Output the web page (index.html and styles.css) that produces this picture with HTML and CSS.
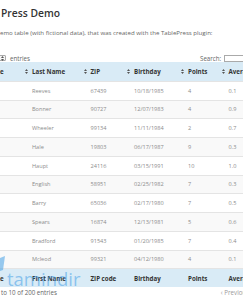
FILE: index.html
```html
<!DOCTYPE html>
<html>
<head>
<meta charset="utf-8">
<link rel="stylesheet" href="styles.css">
</head>
<body>
<div class="page">
  <h1 class="title">Press Demo</h1>
  <p class="desc">emo table (with fictional data), that was created with the TablePress plugin:</p>
  <div class="controls">
    <div class="length"><span class="select"><svg class="sel-arrow" width="3" height="5" viewBox="0 0 3 5"><path d="M0 2 L1.5 0 L3 2 Z M0 3 L1.5 5 L3 3 Z" fill="#555"/></svg></span><span>entries</span></div>
    <div class="search"><span>Search:</span><span class="input"></span></div>
  </div>
  <table class="tbl">
    <colgroup>
      <col class="c0"><col class="c1"><col class="c2"><col class="c3"><col class="c4"><col class="c5">
    </colgroup>
    <thead>
      <tr>
        <th class="first">e</th>
        <th><svg class="sort" width="3" height="5" viewBox="0 0 3 5"><path d="M0 2 L1.5 0 L3 2 Z M0 3 L1.5 5 L3 3 Z"/></svg>Last Name</th>
        <th><svg class="sort" width="3" height="5" viewBox="0 0 3 5"><path d="M0 2 L1.5 0 L3 2 Z M0 3 L1.5 5 L3 3 Z"/></svg>ZIP</th>
        <th><svg class="sort" width="3" height="5" viewBox="0 0 3 5"><path d="M0 2 L1.5 0 L3 2 Z M0 3 L1.5 5 L3 3 Z"/></svg>Birthday</th>
        <th><svg class="sort" width="3" height="5" viewBox="0 0 3 5"><path d="M0 2 L1.5 0 L3 2 Z M0 3 L1.5 5 L3 3 Z"/></svg>Points</th>
        <th><svg class="sort" width="3" height="5" viewBox="0 0 3 5"><path d="M0 2 L1.5 0 L3 2 Z M0 3 L1.5 5 L3 3 Z"/></svg>Average</th>
      </tr>
    </thead>
    <tbody>
      <tr><td></td><td>Reeves</td><td>67439</td><td>10/18/1985</td><td>4</td><td>0.1</td></tr>
      <tr class="alt"><td></td><td>Bonner</td><td>90727</td><td>12/07/1983</td><td>4</td><td>0.9</td></tr>
      <tr><td></td><td>Wheeler</td><td>99134</td><td>11/11/1984</td><td>2</td><td>0.7</td></tr>
      <tr class="alt"><td></td><td>Hale</td><td>19803</td><td>06/17/1987</td><td>9</td><td>0.3</td></tr>
      <tr><td></td><td>Haupt</td><td>24116</td><td>03/15/1991</td><td>10</td><td>1.0</td></tr>
      <tr class="alt"><td></td><td>English</td><td>58951</td><td>02/25/1982</td><td>7</td><td>0.3</td></tr>
      <tr><td></td><td>Barry</td><td>65036</td><td>02/17/1980</td><td>7</td><td>0.5</td></tr>
      <tr class="alt"><td></td><td>Spears</td><td>16874</td><td>12/13/1981</td><td>5</td><td>0.6</td></tr>
      <tr><td></td><td>Bradford</td><td>91543</td><td>01/20/1985</td><td>7</td><td>0.4</td></tr>
      <tr class="alt"><td></td><td>Mcleod</td><td>99321</td><td>04/12/1980</td><td>4</td><td>0.1</td></tr>
    </tbody>
    <tfoot>
      <tr>
        <th class="first">e</th>
        <th>First Name</th>
        <th>ZIP code</th>
        <th>Birthday</th>
        <th>Points</th>
        <th>Average</th>
      </tr>
    </tfoot>
  </table>
  <div class="info">
    <span>to 10 of 200 entries</span>
    <span class="pager">‹ Previous</span>
  </div>
  <div class="watermark">
    <svg class="wm-logo" width="8" height="16" viewBox="0 0 8 16"><path d="M0 2 L5 0 L3 14 L0 15 Z" fill="rgba(70,160,230,0.55)"/></svg>
    <span class="wm-text">tamindir</span>
  </div>
</div>
</body>
</html>
```

FILE: styles.css
```css
html, body {
  margin: 0;
  padding: 0;
  overflow: hidden;
  background: #fff;
}
body {
  width: 243px;
  height: 300px;
  font-family: "Open Sans", "Liberation Sans", sans-serif;
}
.page {
  position: relative;
  width: 300px;
  padding-top: 6px;
}
.title {
  margin: 0;
  font-size: 10.3px;
  line-height: 14px;
  font-weight: 600;
  color: #333;
  padding-left: 1px;
}
.desc {
  margin: 9px 0 0;
  font-size: 6.1px;
  line-height: 8px;
  color: #666;
  white-space: nowrap;
}
.controls {
  margin-top: 17px;
  height: 8px;
  display: flex;
  justify-content: space-between;
  align-items: center;
  font-size: 6.2px;
  color: #666;
}
.length {
  display: flex;
  align-items: center;
  gap: 4px;
}
.select {
  display: flex;
  align-items: center;
  justify-content: flex-end;
  width: 10px;
  height: 6px;
  margin-left: -4px;
  border: 1px solid #aaa;
  border-radius: 1px;
  box-sizing: border-box;
  padding-right: 1px;
  background: #f6f6f6;
}
.search {
  display: flex;
  align-items: center;
  gap: 3px;
  width: 100px;
}
.input {
  display: block;
  width: 70px;
  height: 7px;
  border: 1px solid #aaa;
  box-sizing: border-box;
}
.tbl {
  border-collapse: separate;
  border-spacing: 0;
  table-layout: fixed;
  width: 300px;
}
.c0 { width: 24px; }
.c1 { width: 58.5px; }
.c2 { width: 43.5px; }
.c3 { width: 54px; }
.c4 { width: 40.5px; }
.c5 { width: 79.5px; }
.tbl tr {
  height: 18.75px;
}
.tbl th {
  background: #d9ebf6;
  font-size: 6.2px;
  font-weight: 700;
  color: #333;
  text-align: left;
  padding: 0 0 0 8px;
  white-space: nowrap;
  vertical-align: middle;
  position: relative;
}
.tbl th.first {
  padding-left: 0;
}
.sort {
  position: absolute;
  left: 1px;
  top: 50%;
  margin-top: -2.5px;
  fill: #555;
}
.tbl td {
  font-size: 5.6px;
  color: #8c8c8c;
  padding: 0 0 0 8px;
  border-top: 1px solid #e4e4e4;
  white-space: nowrap;
  vertical-align: middle;
}
.tbl tr.alt td {
  background: #f9f9f9;
}
.tbl tfoot th {
  border-top: 1px solid #e4e4e4;
}
.info {
  display: flex;
  align-items: center;
  height: 10px;
  font-size: 6.2px;
  color: #666;
  padding-left: 1px;
}
.pager {
  margin-left: 164px;
  color: #999;
}
.watermark {
  position: absolute;
  left: 0;
  top: 256px;
  display: flex;
  align-items: flex-end;
  pointer-events: none;
}
.wm-logo {
  margin-bottom: 17px;
}
.wm-text {
  font-size: 18.5px;
  line-height: 20px;
  color: rgba(70, 160, 230, 0.55);
  margin-left: -1px;
  margin-top: 11px;
}
```
